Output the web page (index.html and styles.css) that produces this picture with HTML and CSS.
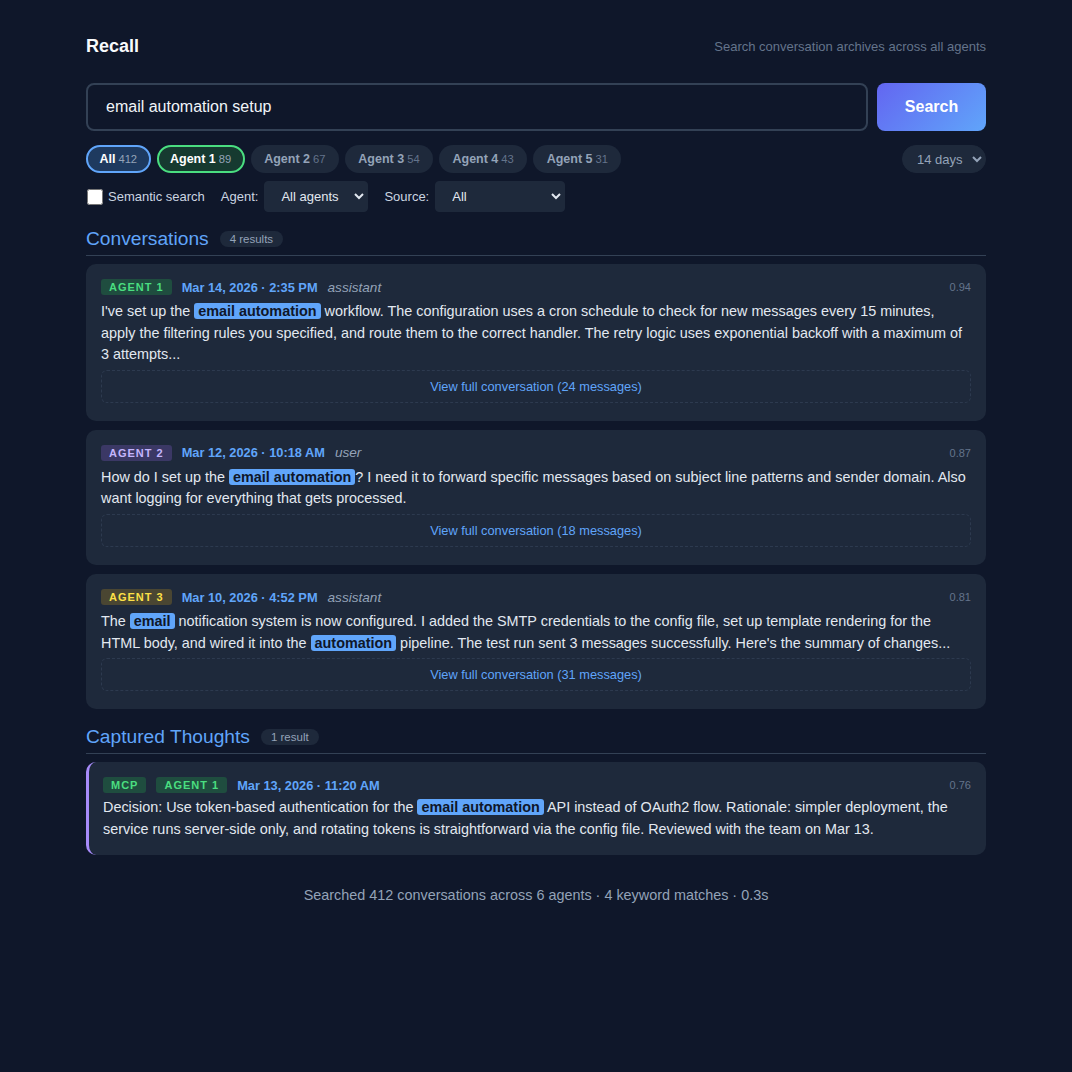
FILE: index.html
```html
<!DOCTYPE html>
<html lang="en">
<head>
<meta charset="utf-8">
<title>Recall</title>
<link rel="stylesheet" href="styles.css">
</head>
<body>
<div class="page">
  <header class="top">
    <h1 class="brand">Recall</h1>
    <span class="tagline">Search conversation archives across all agents</span>
  </header>

  <form class="search-row" onsubmit="return false">
    <input class="search-input" type="text" value="email automation setup">
    <button class="search-btn" type="submit">Search</button>
  </form>

  <div class="chips-row">
    <div class="chips">
      <span class="chip chip-all">All <span class="count">412</span></span>
      <span class="chip chip-green">Agent 1 <span class="count">89</span></span>
      <span class="chip">Agent 2 <span class="count">67</span></span>
      <span class="chip">Agent 3 <span class="count">54</span></span>
      <span class="chip">Agent 4 <span class="count">43</span></span>
      <span class="chip">Agent 5 <span class="count">31</span></span>
    </div>
    <select class="days">
      <option>14 days</option>
    </select>
  </div>

  <div class="filters">
    <label class="check"><input type="checkbox"> Semantic search</label>
    <label class="field">Agent:
      <select class="sel sel-agent"><option>All agents</option></select>
    </label>
    <label class="field">Source:
      <select class="sel sel-source"><option>All</option></select>
    </label>
  </div>

  <h2 class="section-title">Conversations <span class="pill">4 results</span></h2>

  <article class="card">
    <div class="meta">
      <span class="badge b-green">Agent 1</span>
      <span class="date">Mar 14, 2026 · 2:35 PM</span>
      <span class="role">assistant</span>
      <span class="score">0.94</span>
    </div>
    <p class="text">I've set up the <mark>email automation</mark> workflow. The configuration uses a cron schedule to check for new messages every 15 minutes, apply the filtering rules you specified, and route them to the correct handler. The retry logic uses exponential backoff with a maximum of 3 attempts...</p>
    <a class="view" href="#">View full conversation (24 messages)</a>
  </article>

  <article class="card">
    <div class="meta">
      <span class="badge b-purple">Agent 2</span>
      <span class="date">Mar 12, 2026 · 10:18 AM</span>
      <span class="role">user</span>
      <span class="score">0.87</span>
    </div>
    <p class="text">How do I set up the <mark>email automation</mark>? I need it to forward specific messages based on subject line patterns and sender domain. Also want logging for everything that gets processed.</p>
    <a class="view" href="#">View full conversation (18 messages)</a>
  </article>

  <article class="card">
    <div class="meta">
      <span class="badge b-yellow">Agent 3</span>
      <span class="date">Mar 10, 2026 · 4:52 PM</span>
      <span class="role">assistant</span>
      <span class="score">0.81</span>
    </div>
    <p class="text">The <mark>email</mark> notification system is now configured. I added the SMTP credentials to the config file, set up template rendering for the HTML body, and wired it into the <mark>automation</mark> pipeline. The test run sent 3 messages successfully. Here's the summary of changes...</p>
    <a class="view" href="#">View full conversation (31 messages)</a>
  </article>

  <h2 class="section-title">Captured Thoughts <span class="pill">1 result</span></h2>

  <article class="card thought">
    <div class="meta">
      <span class="badge b-green">MCP</span>
      <span class="badge b-green">Agent 1</span>
      <span class="date">Mar 13, 2026 · 11:20 AM</span>
      <span class="score">0.76</span>
    </div>
    <p class="text">Decision: Use token-based authentication for the <mark>email automation</mark> API instead of OAuth2 flow. Rationale: simpler deployment, the service runs server-side only, and rotating tokens is straightforward via the config file. Reviewed with the team on Mar 13.</p>
  </article>

  <footer class="foot">Searched 412 conversations across 6 agents · 4 keyword matches · 0.3s</footer>
</div>
</body>
</html>
```

FILE: styles.css
```css
* { box-sizing: border-box; }

html, body {
  margin: 0;
  background: #0f172a;
  color: #e2e8f0;
  font-family: "Liberation Sans", Arial, Helvetica, sans-serif;
}

.page {
  max-width: 900px;
  margin: 0 auto;
  padding: 35px 0 40px;
}

.top {
  display: flex;
  justify-content: space-between;
  align-items: center;
  height: 22px;
  margin-bottom: 26px;
}

.brand {
  margin: 0;
  font-size: 18px;
  font-weight: 700;
  color: #f8fafc;
}

.tagline {
  font-size: 13px;
  color: #64748b;
}

.search-row {
  display: flex;
  gap: 9px;
  margin: 0 0 14px;
}

.search-input {
  flex: 1;
  height: 48px;
  padding: 0 18px;
  background: #0f172a;
  border: 2px solid #334155;
  border-radius: 8px;
  color: #f1f5f9;
  font-family: inherit;
  font-size: 16px;
  outline: none;
}

.search-btn {
  width: 109px;
  height: 48px;
  border: 0;
  border-radius: 8px;
  background: linear-gradient(135deg, #6366f1, #60a5fa);
  color: #ffffff;
  font-family: inherit;
  font-size: 16px;
  font-weight: 700;
}

.chips-row {
  display: flex;
  justify-content: space-between;
  align-items: center;
  margin-bottom: 8px;
}

.chips {
  display: flex;
  gap: 6px;
}

.chip {
  display: inline-flex;
  align-items: center;
  gap: 3px;
  height: 28px;
  padding: 0 11.45px;
  border: 2px solid transparent;
  border-radius: 999px;
  background: #1e293b;
  color: #94a3b8;
  font-size: 12.5px;
  font-weight: 700;
}

.chip .count {
  font-size: 11.2px;
  font-weight: 400;
  color: #64748b;
}

.chip-all {
  border-color: #60a5fa;
  background: #1e3a5f;
  color: #ffffff;
}
.chip-all .count { color: #94a3b8; }

.chip-green {
  border-color: #4ade80;
  background: #163a30;
  color: #ffffff;
}
.chip-green .count { color: #94a3b8; }

.days {
  height: 28px;
  padding: 0 6px 0 10px;
  border: 1px solid #1e293b;
  border-radius: 999px;
  background: #1e293b;
  color: #94a3b8;
  font-family: inherit;
  font-size: 13px;
  color-scheme: dark;
}

.filters {
  display: flex;
  align-items: center;
  gap: 16px;
  font-size: 13px;
  color: #cbd5e1;
}

.check {
  display: flex;
  align-items: center;
  gap: 5px;
}

.check input {
  width: 16px;
  height: 16px;
  margin: 0 0 0 1px;
}

.field {
  display: flex;
  align-items: center;
  gap: 6px;
}

.sel {
  height: 31px;
  padding: 0 8px 0 12px;
  border: 1px solid #1e293b;
  border-radius: 4px;
  background: #1e293b;
  color: #e2e8f0;
  font-family: inherit;
  font-size: 13px;
  color-scheme: dark;
}

.sel-agent { width: 104px; }
.sel-source { width: 130px; }

.section-title {
  display: flex;
  align-items: center;
  gap: 11px;
  margin: 16px 0 8px;
  padding-bottom: 5px;
  border-bottom: 1px solid #334155;
  font-size: 19.2px;
  font-weight: 400;
  color: #60a5fa;
}

.card + .section-title {
  margin-top: 17px;
}

.pill {
  display: inline-block;
  padding: 2px 10px;
  border-radius: 999px;
  background: #1e293b;
  color: #94a3b8;
  font-size: 11.5px;
}

.card {
  background: #1e293b;
  border-radius: 10px;
  padding: 15px;
  margin-bottom: 9px;
}

.meta {
  display: flex;
  align-items: center;
  gap: 10px;
  height: 16px;
  margin-bottom: 6px;
}

.badge {
  display: inline-block;
  padding: 1px 8px;
  border-radius: 3px;
  font-size: 11px;
  font-weight: 700;
  letter-spacing: 1px;
  text-transform: uppercase;
  line-height: 14px;
}

.b-green { background: #1f4d3f; color: #4ade80; }
.b-purple { background: #3b3865; color: #c4b5fd; }
.b-yellow { background: #4a4632; color: #fde047; }

.date {
  font-size: 12.8px;
  font-weight: 700;
  color: #60a5fa;
}

.role {
  font-size: 13.6px;
  font-style: italic;
  color: #94a3b8;
}

.score {
  margin-left: auto;
  font-size: 11px;
  color: #64748b;
}

.text {
  margin: 0;
  font-size: 14.4px;
  line-height: 1.5;
  color: #e2e8f0;
}

mark {
  background: #60a5fa;
  color: #0f172a;
  font-weight: 700;
  padding: 0 4px;
  border-radius: 3px;
}

.view {
  display: block;
  margin: 4px 0 3px;
  height: 33px;
  line-height: 31px;
  border: 1px dashed #2d3a4f;
  border-radius: 6px;
  text-align: center;
  font-size: 12.8px;
  color: #60a5fa;
  text-decoration: none;
}

.thought {
  border-left: 3px solid #a78bfa;
  padding: 15px 15px 15px 14px;
}

.thought .meta {
  margin-bottom: 4px;
}

.foot {
  margin-top: 32px;
  text-align: center;
  font-size: 14.4px;
  color: #94a3b8;
}
```
